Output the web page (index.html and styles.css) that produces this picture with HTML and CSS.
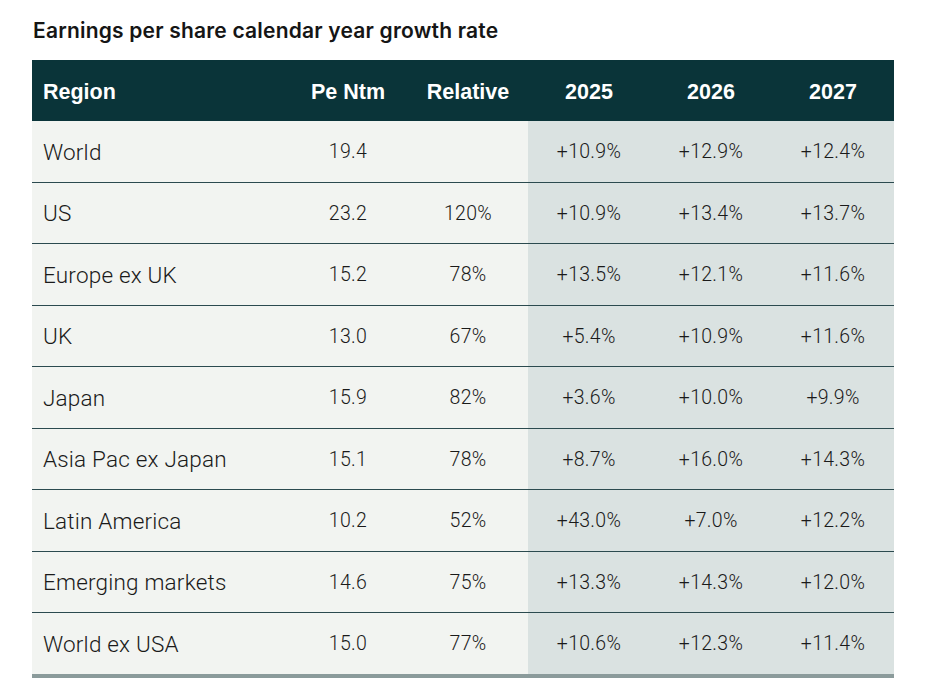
FILE: index.html
```html
<!DOCTYPE html>
<html>
<head>
<meta charset="utf-8">
<link rel="stylesheet" href="styles.css">
</head>
<body>
<div class="wrap">
  <h1 class="title">Earnings per share calendar year growth rate</h1>
  <table class="eps">
    <colgroup>
      <col class="c-region"><col class="c-pe"><col class="c-rel"><col class="c-yr"><col class="c-yr"><col class="c-yr">
    </colgroup>
    <thead>
      <tr><th class="left">Region</th><th>Pe Ntm</th><th>Relative</th><th>2025</th><th>2026</th><th>2027</th></tr>
    </thead>
    <tbody>
      <tr><td class="left">World</td><td>19.4</td><td></td><td class="yr">+10.9%</td><td class="yr">+12.9%</td><td class="yr">+12.4%</td></tr>
      <tr><td class="left">US</td><td>23.2</td><td>120%</td><td class="yr">+10.9%</td><td class="yr">+13.4%</td><td class="yr">+13.7%</td></tr>
      <tr><td class="left">Europe ex UK</td><td>15.2</td><td>78%</td><td class="yr">+13.5%</td><td class="yr">+12.1%</td><td class="yr">+11.6%</td></tr>
      <tr><td class="left">UK</td><td>13.0</td><td>67%</td><td class="yr">+5.4%</td><td class="yr">+10.9%</td><td class="yr">+11.6%</td></tr>
      <tr><td class="left">Japan</td><td>15.9</td><td>82%</td><td class="yr">+3.6%</td><td class="yr">+10.0%</td><td class="yr">+9.9%</td></tr>
      <tr><td class="left">Asia Pac ex Japan</td><td>15.1</td><td>78%</td><td class="yr">+8.7%</td><td class="yr">+16.0%</td><td class="yr">+14.3%</td></tr>
      <tr><td class="left">Latin America</td><td>10.2</td><td>52%</td><td class="yr">+43.0%</td><td class="yr">+7.0%</td><td class="yr">+12.2%</td></tr>
      <tr><td class="left">Emerging markets</td><td>14.6</td><td>75%</td><td class="yr">+13.3%</td><td class="yr">+14.3%</td><td class="yr">+12.0%</td></tr>
      <tr class="last"><td class="left">World ex USA</td><td>15.0</td><td>77%</td><td class="yr">+10.6%</td><td class="yr">+12.3%</td><td class="yr">+11.4%</td></tr>
    </tbody>
  </table>
</div>
</body>
</html>
```
FILE: styles.css
```css
html, body {
  margin: 0;
  padding: 0;
  background: #ffffff;
}
body {
  font-family: "Liberation Sans", Arial, sans-serif;
  color: #1c1c1c;
}
.wrap {
  padding: 18px 33px 0 32px;
}
.title {
  margin: 0 0 16px 1px;
  font-family: Inter, "Liberation Sans", sans-serif;
  font-size: 21px;
  font-weight: 600;
  line-height: 26px;
  letter-spacing: 0.2px;
  color: #151515;
}
.eps {
  width: 862px;
  border-collapse: collapse;
  table-layout: fixed;
}
.c-region { width: 256px; }
.c-pe { width: 120px; }
.c-rel { width: 120px; }
.c-yr { width: 122px; }
.eps th {
  height: 58px;
  padding: 3px 0 0;
  background: #0a3439;
  color: #ffffff;
  font-family: "Liberation Sans", Arial, sans-serif;
  font-size: 21.5px;
  font-weight: 700;
  text-align: center;
}
.eps td {
  height: 59.5px;
  padding: 1px 0 0;
  background: #f2f4f1;
  border-bottom: 1px solid #2b4a4f;
  font-family: Roboto, "Liberation Sans", sans-serif;
  font-size: 19.5px;
  font-weight: 300;
  letter-spacing: 0.3px;
  color: #1a1a1a;
  text-align: center;
}
.eps td.yr {
  background: #dae2e1;
}
.eps td.left {
  text-align: left;
  padding-left: 11px;
  font-size: 22.5px;
  letter-spacing: 0.2px;
}
.eps th.left {
  text-align: left;
  padding-left: 11px;
}
.eps tr.last td {
  border-bottom: 4px solid #8b9b9b;
}
```
